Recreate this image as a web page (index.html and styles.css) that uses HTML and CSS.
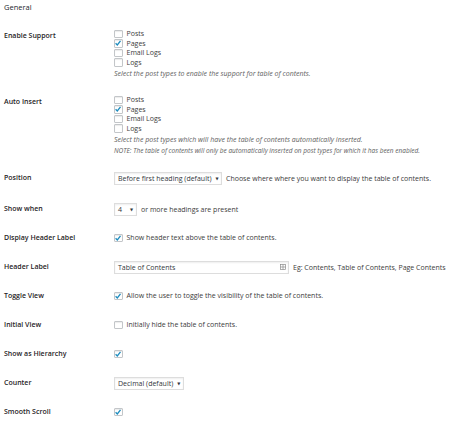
FILE: index.html
```html
<!DOCTYPE html>
<html>
<head>
<meta charset="utf-8">
<link rel="stylesheet" href="styles.css">
</head>
<body>
<div class="page">
  <h2 class="section-title">General</h2>
  <div class="form">
    <div class="row row-multi row-support">
      <div class="label">Enable Support</div>
      <div class="field">
        <label class="check"><span class="box"></span>Posts</label>
        <label class="check"><span class="box checked"><svg viewBox="0 0 8 8"><path d="M1.6 4.3L3.3 6L6.5 1.9"/></svg></span>Pages</label>
        <label class="check"><span class="box"></span>Email Logs</label>
        <label class="check"><span class="box"></span>Logs</label>
        <p class="desc">Select the post types to enable the support for table of contents.</p>
      </div>
    </div>
    <div class="row row-multi row-insert">
      <div class="label">Auto Insert</div>
      <div class="field">
        <label class="check"><span class="box"></span>Posts</label>
        <label class="check"><span class="box checked"><svg viewBox="0 0 8 8"><path d="M1.6 4.3L3.3 6L6.5 1.9"/></svg></span>Pages</label>
        <label class="check"><span class="box"></span>Email Logs</label>
        <label class="check"><span class="box"></span>Logs</label>
        <p class="desc">Select the post types which will have the table of contents automatically inserted.</p>
        <p class="note">NOTE: The table of contents will only be automatically inserted on post types for which it has been enabled.</p>
      </div>
    </div>
    <div class="row row-position">
      <div class="label">Position</div>
      <div class="field inline">
        <span class="select sel-position">Before first heading (default)<span class="arrow">▼</span></span>
        <span class="after">Choose where where you want to display the table of contents.</span>
      </div>
    </div>
    <div class="row">
      <div class="label">Show when</div>
      <div class="field inline">
        <span class="select sel-count">4<span class="arrow">▼</span></span>
        <span class="after">or more headings are present</span>
      </div>
    </div>
    <div class="row">
      <div class="label">Display Header Label</div>
      <div class="field inline">
        <label class="check"><span class="box checked"><svg viewBox="0 0 8 8"><path d="M1.6 4.3L3.3 6L6.5 1.9"/></svg></span>Show header text above the table of contents.</label>
      </div>
    </div>
    <div class="row">
      <div class="label">Header Label</div>
      <div class="field inline">
        <span class="text-input">Table of Contents<svg class="input-icon" viewBox="0 0 7 7"><rect x="0.5" y="0.5" width="6" height="6"/><path d="M3.5 0.5V6.5M0.5 3.5H6.5"/></svg></span>
        <span class="after">Eg: Contents, Table of Contents, Page Contents</span>
      </div>
    </div>
    <div class="row">
      <div class="label">Toggle View</div>
      <div class="field inline">
        <label class="check"><span class="box checked"><svg viewBox="0 0 8 8"><path d="M1.6 4.3L3.3 6L6.5 1.9"/></svg></span>Allow the user to toggle the visibility of the table of contents.</label>
      </div>
    </div>
    <div class="row">
      <div class="label">Initial View</div>
      <div class="field inline">
        <label class="check"><span class="box"></span>Initially hide the table of contents.</label>
      </div>
    </div>
    <div class="row">
      <div class="label">Show as Hierarchy</div>
      <div class="field inline">
        <label class="check"><span class="box checked"><svg viewBox="0 0 8 8"><path d="M1.6 4.3L3.3 6L6.5 1.9"/></svg></span></label>
      </div>
    </div>
    <div class="row">
      <div class="label">Counter</div>
      <div class="field inline">
        <span class="select sel-counter">Decimal (default)<span class="arrow">▼</span></span>
      </div>
    </div>
    <div class="row">
      <div class="label">Smooth Scroll</div>
      <div class="field inline">
        <label class="check"><span class="box checked"><svg viewBox="0 0 8 8"><path d="M1.6 4.3L3.3 6L6.5 1.9"/></svg></span></label>
      </div>
    </div>
  </div>
</div>
</body>
</html>
```
FILE: styles.css
```css
html, body {
  margin: 0;
  padding: 0;
  background: #ffffff;
}
body {
  font-family: "Open Sans", "DejaVu Sans", sans-serif;
  color: #3c3c3c;
  font-size: 7px;
}
.page {
  padding: 2px 0 0 4px;
}
.section-title {
  margin: 0;
  font-size: 7.5px;
  font-weight: 400;
  line-height: 10px;
  color: #23282d;
}
.form {
  margin-top: 16px;
}
.row {
  display: flex;
  align-items: flex-start;
  min-height: 29px;
}
.row-position {
  min-height: 31px;
}
.label {
  width: 110px;
  flex: none;
  font-size: 7px;
  font-weight: 600;
  color: #1f2326;
  line-height: 10px;
  padding-top: 3px;
}
.row-multi .field {
  padding-top: 1px;
}
.row-support .field {
  padding-bottom: 15px;
}
.row-insert .field {
  padding-bottom: 14px;
}
.field {
  display: flex;
  flex-direction: column;
  align-items: flex-start;
}
.field.inline {
  flex-direction: row;
  align-items: center;
  gap: 4px;
  min-height: 16px;
}
.check {
  display: flex;
  align-items: center;
  gap: 4px;
  height: 9.5px;
  line-height: 9.5px;
  color: #3c3c3c;
}
.box {
  width: 8.5px;
  height: 8.5px;
  box-sizing: border-box;
  border: 1px solid #c3c6c9;
  border-radius: 1px;
  background: #fff;
  box-shadow: inset 0 1px 1px rgba(0,0,0,0.08);
  flex: none;
  display: flex;
}
.box svg {
  width: 8px;
  height: 8px;
  margin: -0.75px;
}
.box svg path {
  fill: none;
  stroke: #1e8cbe;
  stroke-width: 1.3;
}
.desc {
  margin: 2px 0 0;
  font-style: italic;
  color: #5e5e5e;
  line-height: 10px;
}
.note {
  margin: 1px 0 0;
  font-style: italic;
  color: #5e5e5e;
  font-size: 6.5px;
  line-height: 10px;
}
.select {
  display: inline-flex;
  align-items: center;
  justify-content: space-between;
  box-sizing: border-box;
  height: 13px;
  padding: 0 3px 0 3px;
  border: 1px solid #dddddd;
  background: #fff;
  box-shadow: inset 0 1px 2px rgba(0,0,0,0.07);
  color: #32373c;
  white-space: nowrap;
  gap: 4px;
}
.arrow {
  font-size: 4px;
  color: #32373c;
}
.sel-position { width: 108px; }
.sel-count { width: 23px; }
.sel-counter { width: 70px; }
.after {
  white-space: nowrap;
  color: #3c3c3c;
}
.text-input {
  display: inline-flex;
  align-items: center;
  justify-content: space-between;
  box-sizing: border-box;
  width: 175px;
  height: 13px;
  padding: 0 2px 0 3px;
  border: 1px solid #dddddd;
  background: #fff;
  box-shadow: inset 0 1px 2px rgba(0,0,0,0.07);
  color: #32373c;
}
.input-icon {
  width: 6px;
  height: 6px;
}
.input-icon rect, .input-icon path {
  fill: none;
  stroke: #888888;
  stroke-width: 0.8;
}
```
